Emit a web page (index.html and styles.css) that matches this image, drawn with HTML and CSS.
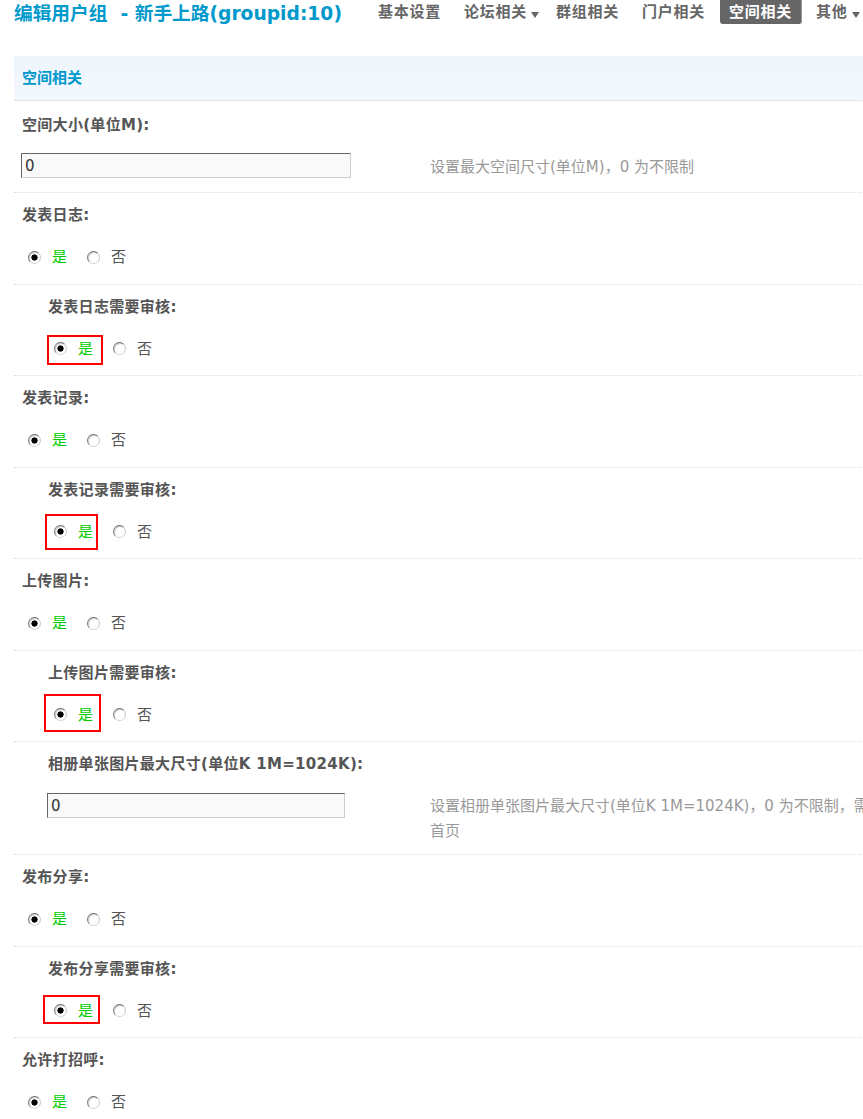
FILE: index.html
```html
<!DOCTYPE html>
<html lang="zh-CN">
<head>
<meta charset="utf-8">
<title>编辑用户组 - 新手上路</title>
<link rel="stylesheet" href="styles.css">
</head>
<body>
<div class="page">
  <div class="topbar">
    <h3 class="title">编辑用户组&nbsp; - 新手上路(groupid:10)</h3>
    <ul class="tabs">
      <li><a href="#">基本设置</a></li>
      <li class="drop"><a href="#">论坛相关<span class="caret"></span></a></li>
      <li><a href="#">群组相关</a></li>
      <li><a href="#">门户相关</a></li>
      <li class="current"><a href="#">空间相关</a></li>
      <li class="drop"><a href="#">其他<span class="caret"></span></a></li>
    </ul>
  </div>

  <div class="tb">
    <div class="partition">空间相关</div>

    <div class="sec first">
      <div class="lbl">空间大小(单位M):</div>
      <div class="field">
        <div class="fcell"><input class="txt" type="text" value="0"></div>
        <div class="tips">设置最大空间尺寸(单位M)，0 为不限制</div>
      </div>
    </div>

    <div class="sec">
      <div class="lbl">发表日志:</div>
      <div class="opts">
        <label class="opt"><input class="radio" type="radio" name="allowblog" checked><span class="yes">是</span></label>
        <label class="opt"><input class="radio" type="radio" name="allowblog"><span class="no">否</span></label>
      </div>
    </div>

    <div class="sec sub">
      <div class="lbl">发表日志需要审核:</div>
      <div class="opts">
        <label class="opt"><input class="radio" type="radio" name="blogmod" checked><span class="yes">是</span></label>
        <label class="opt"><input class="radio" type="radio" name="blogmod"><span class="no">否</span></label>
        <span class="mark mark-a"></span>
      </div>
    </div>

    <div class="sec">
      <div class="lbl">发表记录:</div>
      <div class="opts">
        <label class="opt"><input class="radio" type="radio" name="allowdoing" checked><span class="yes">是</span></label>
        <label class="opt"><input class="radio" type="radio" name="allowdoing"><span class="no">否</span></label>
      </div>
    </div>

    <div class="sec sub">
      <div class="lbl">发表记录需要审核:</div>
      <div class="opts">
        <label class="opt"><input class="radio" type="radio" name="doingmod" checked><span class="yes">是</span></label>
        <label class="opt"><input class="radio" type="radio" name="doingmod"><span class="no">否</span></label>
        <span class="mark mark-b"></span>
      </div>
    </div>

    <div class="sec">
      <div class="lbl">上传图片:</div>
      <div class="opts">
        <label class="opt"><input class="radio" type="radio" name="allowupload" checked><span class="yes">是</span></label>
        <label class="opt"><input class="radio" type="radio" name="allowupload"><span class="no">否</span></label>
      </div>
    </div>

    <div class="sec sub">
      <div class="lbl">上传图片需要审核:</div>
      <div class="opts">
        <label class="opt"><input class="radio" type="radio" name="uploadmod" checked><span class="yes">是</span></label>
        <label class="opt"><input class="radio" type="radio" name="uploadmod"><span class="no">否</span></label>
        <span class="mark mark-c"></span>
      </div>
    </div>

    <div class="sec sub album">
      <div class="lbl">相册单张图片最大尺寸(单位K 1M=1024K):</div>
      <div class="field">
        <div class="fcell"><input class="txt" type="text" value="0"></div>
        <div class="tips">设置相册单张图片最大尺寸(单位K 1M=1024K)，0 为不限制，需要同时限制上传到个人空间<br>首页</div>
      </div>
    </div>

    <div class="sec">
      <div class="lbl">发布分享:</div>
      <div class="opts">
        <label class="opt"><input class="radio" type="radio" name="allowshare" checked><span class="yes">是</span></label>
        <label class="opt"><input class="radio" type="radio" name="allowshare"><span class="no">否</span></label>
      </div>
    </div>

    <div class="sec sub">
      <div class="lbl">发布分享需要审核:</div>
      <div class="opts">
        <label class="opt"><input class="radio" type="radio" name="sharemod" checked><span class="yes">是</span></label>
        <label class="opt"><input class="radio" type="radio" name="sharemod"><span class="no">否</span></label>
        <span class="mark mark-d"></span>
      </div>
    </div>

    <div class="sec">
      <div class="lbl">允许打招呼:</div>
      <div class="opts">
        <label class="opt"><input class="radio" type="radio" name="allowpoke" checked><span class="yes">是</span></label>
        <label class="opt"><input class="radio" type="radio" name="allowpoke"><span class="no">否</span></label>
      </div>
    </div>
  </div>
</div>
</body>
</html>
```

FILE: styles.css
```css
html {
  overflow: hidden;
  background: #fff;
}

body {
  margin: 0;
  font-family: "DejaVu Sans", "Noto Sans CJK SC", sans-serif;
  font-size: 15px;
  color: #555;
}

.page {
  width: 1100px;
  padding-left: 14px;
}

/* ---------- top bar ---------- */
.topbar {
  display: flex;
  align-items: flex-start;
  height: 28px;
  margin-bottom: 28px;
}

.title {
  margin: 0;
  font-size: 18.7px;
  line-height: 28px;
  font-weight: bold;
  color: #09c;
  white-space: nowrap;
}

.tabs {
  display: flex;
  gap: 5px;
  list-style: none;
  margin: 0 0 0 27px;
  padding: 0;
}

.tabs a {
  display: block;
  padding: 0 9px;
  line-height: 24px;
  font-size: 15px;
  font-weight: bold;
  letter-spacing: 0.75px;
  color: #666;
  text-decoration: none;
  white-space: nowrap;
}

.tabs .drop a {
  padding-right: 3px;
}

.caret {
  display: inline-block;
  width: 0;
  height: 0;
  margin-left: 4px;
  border-left: 4.5px solid transparent;
  border-right: 4.5px solid transparent;
  border-top: 6px solid #666;
  vertical-align: -1px;
}

.tabs .current {
  margin-left: 1px;
}

.tabs .current a {
  background: #666;
  color: #fff;
  border-radius: 0 0 3px 3px;
  border-right: 1px solid #999;
}

/* ---------- table ---------- */
.tb {
  width: 100%;
}

.partition {
  height: 44px;
  line-height: 44px;
  padding: 0 8px;
  background: linear-gradient(#edf5fc, #f3f8fd);
  border-bottom: 1px dotted #c9dcec;
  font-weight: bold;
  color: #09c;
}

.sec {
  border-top: 1px dotted #cfe0ee;
}

.sec.first {
  border-top: 0;
}

.lbl {
  padding: 12px 8px 6px;
  line-height: 20px;
  font-weight: bold;
  color: #555;
  letter-spacing: 0.3px;
  white-space: nowrap;
}

.first .lbl {
  padding-top: 14px;
}

.sub .lbl {
  padding-left: 34px;
}

.field {
  display: grid;
  grid-template-columns: 409px 1fr;
  padding: 12px 7px 12px;
}

.sub .field {
  padding-left: 33px;
  grid-template-columns: 383px 1fr;
}

.album .field {
  padding-top: 13px;
  padding-bottom: 10px;
}

.txt {
  display: block;
  box-sizing: border-box;
  width: 330px;
  height: 25px;
  margin: 0;
  padding: 0 3px;
  border: 1px solid;
  border-color: #666 #ccc #ccc #666;
  background: #f9f9f9;
  font-family: "DejaVu Sans", "Noto Sans CJK SC", sans-serif;
  font-size: 15px;
  color: #333;
  outline: none;
}

.sub .txt {
  width: 298px;
}

.tips {
  padding-top: 1px;
  line-height: 25px;
  color: #999;
  white-space: nowrap;
}

.first .tips {
  padding-top: 2px;
}

/* ---------- radio rows ---------- */
.opts {
  position: relative;
  display: flex;
  align-items: center;
  padding: 16px 8px 16.5px;
  line-height: 20px;
}

.sub .opts {
  padding-left: 34px;
}

.opt {
  display: flex;
  align-items: center;
}

.opt + .opt {
  margin-left: 14px;
}

.radio {
  appearance: none;
  -webkit-appearance: none;
  box-sizing: border-box;
  width: 13px;
  height: 13px;
  margin: 0 11px 0 6px;
  border: 1px solid;
  border-color: #6e6e6e #c8c8c8 #d4d4d4 #7a7a7a;
  border-radius: 50%;
  background: #fff;
  box-shadow: inset 1px 1px 0 #d0d0d0;
}

.radio:checked {
  background: radial-gradient(circle, #000 0 2.8px, #fff 3.4px);
}

.yes {
  color: #0c0;
}

.no {
  color: #555;
}

/* ---------- red annotation boxes ---------- */
.mark {
  position: absolute;
  box-sizing: border-box;
  border: 2px solid #f00;
  pointer-events: none;
}

.mark-a {
  left: 33px;
  top: 12.5px;
  width: 56px;
  height: 30px;
}

.mark-b {
  left: 31px;
  top: 8px;
  width: 53px;
  height: 36px;
}

.mark-c {
  left: 30px;
  top: 5px;
  width: 57px;
  height: 38px;
}

.mark-d {
  left: 29px;
  top: 10px;
  width: 57px;
  height: 29px;
}
```
